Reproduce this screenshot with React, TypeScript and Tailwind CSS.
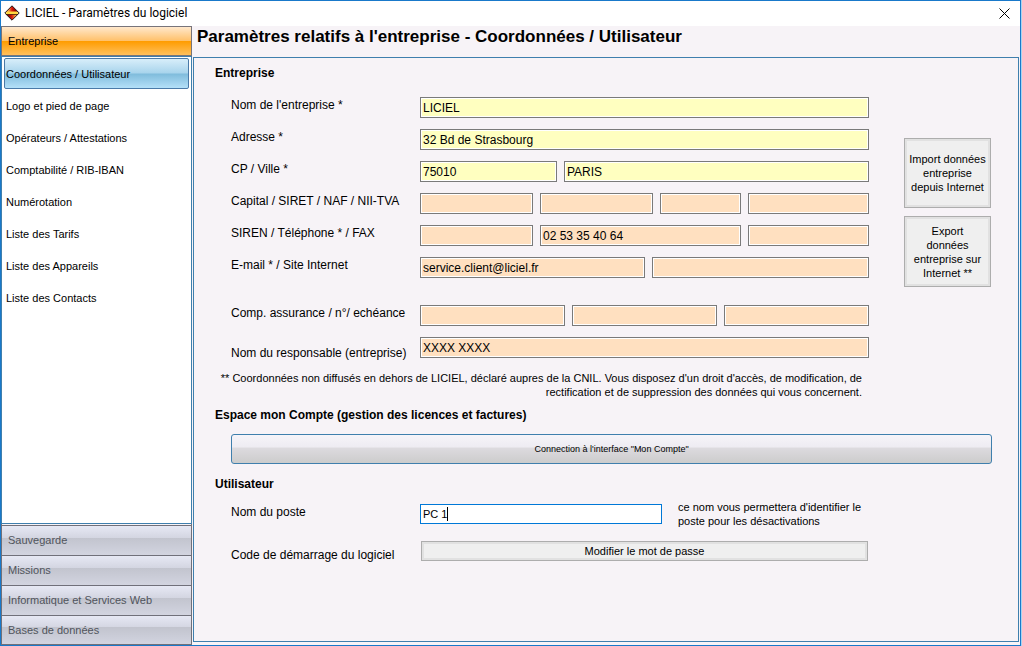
import { useState, type ReactNode } from 'react';

const menuItems = [
  'Coordonnées / Utilisateur',
  'Logo et pied de page',
  'Opérateurs / Attestations',
  'Comptabilité / RIB-IBAN',
  'Numérotation',
  'Liste des Tarifs',
  'Liste des Appareils',
  'Liste des Contacts',
];

const sections = ['Sauvegarde', 'Missions', 'Informatique et Services Web', 'Bases de données'];

interface FieldProps {
  id: string;
  label: string;
  value?: string;
  color?: string;
}

function Field({ id, label, value = '', color = 'bg-[#ffe0c0]' }: FieldProps) {
  return (
    <input
      id={id}
      aria-label={label}
      defaultValue={value}
      className={`h-[21px] w-full min-w-0 border border-[#7a7a7a] px-0.5 text-[12px] leading-4 shadow-[inset_0_0_0_1px_#fff] outline-none ${color}`}
    />
  );
}

interface RowProps {
  label: string;
  htmlFor: string;
  cols?: string;
  low?: boolean;
  children: ReactNode;
}

function Row({ label, htmlFor, cols = 'grid-cols-1', low, children }: RowProps) {
  return (
    <div className="flex items-start">
      <label htmlFor={htmlFor} className={`w-[189px] shrink-0 text-[12px] leading-4 ${low ? 'pt-2' : ''}`}>
        {label}
      </label>
      <div className={`grid min-w-0 flex-1 gap-[7px] ${cols}`}>{children}</div>
    </div>
  );
}

function Logo() {
  return (
    <svg width="16" height="16" viewBox="0 0 16 16" aria-hidden="true">
      <defs>
        <linearGradient id="logoTop" x1="0" x2="1">
          <stop offset="0.2" stopColor="#f8a050" />
          <stop offset="0.5" stopColor="#d81808" />
          <stop offset="0.8" stopColor="#8c0000" />
        </linearGradient>
        <linearGradient id="logoBottom" x1="0" x2="1">
          <stop offset="0.2" stopColor="#8c0000" />
          <stop offset="0.5" stopColor="#d82010" />
          <stop offset="0.8" stopColor="#f8b040" />
        </linearGradient>
      </defs>
      <path d="M8 1 L14 7 H2 Z" fill="url(#logoTop)" />
      <path d="M2 9 H14 L8 15 Z" fill="url(#logoBottom)" />
      <path d="M1.500 8 L3 6.500 H13 L14.500 8 L13 9.500 H3 Z" fill="#ffd840" />
      <path d="M2 9.500 H14" stroke="#401008" strokeWidth="0.8" />
      <path d="M8 0.800 L15.200 8 L8 15.200 L0.800 8 Z" fill="none" stroke="#201010" strokeWidth="1" />
    </svg>
  );
}

const yellow = 'bg-[#ffffc0]';
const flatButton = 'border border-[#adadad] bg-[#efefef] text-[11px] leading-[14px] shadow-[inset_0_0_0_2px_#e1e1e1]';

export default function App() {
  const [active, setActive] = useState(0);

  return (
    <div className="min-h-screen bg-[#a9d3f0] pr-px font-['Liberation_Sans',Arial,sans-serif] text-black">
      <div className="flex min-h-screen flex-col border border-[#1979ca] bg-[#f7f3f7]">
        <header className="flex h-[25px] items-center bg-white pr-2 pb-px pl-[3px]">
          <Logo />
          <h1 className="ml-[5px] flex-1 font-[Roboto,'Open_Sans',sans-serif] text-[12px] leading-4">
            LICIEL - Paramètres du logiciel
          </h1>
          <button type="button" aria-label="Fermer" className="p-0.5">
            <svg width="11" height="11" viewBox="0 0 11 11" stroke="#000" strokeWidth="1">
              <path d="M0.500 0.500 L10.500 10.500 M10.500 0.500 L0.500 10.500" />
            </svg>
          </button>
        </header>

        <div className="flex flex-1">
          <nav className="flex w-[191px] shrink-0 flex-col text-[11px]">
            <button
              type="button"
              className="h-[30px] border border-[#77747a] pl-1.5 text-left [background-image:linear-gradient(#ffe8cc_0%,#ffc068_50%,#ff9c00_51%,#ffc05c_100%)]"
            >
              Entreprise
            </button>
            <ul className="flex flex-1 flex-col border-x border-y border-[#3f7fad] bg-white pt-px">
              {menuItems.map((item, i) => (
                <li key={item} className="h-8 px-0.5">
                  <button
                    type="button"
                    onClick={() => setActive(i)}
                    className={`h-[31px] w-full rounded-xs border pt-0.5 pl-px text-left ${
                      active === i
                        ? 'border-[#4a7aa8] [background-image:linear-gradient(#d8eefa_0%,#a8d4ec_48%,#80bcdc_52%,#b4e0f8_100%)]'
                        : 'border-transparent'
                    }`}
                  >
                    {item}
                  </button>
                </li>
              ))}
            </ul>
            <div className="border-x border-b border-[#70707a] pt-px">
              {sections.map((section) => (
                <button
                  key={section}
                  type="button"
                  className="block h-[30px] w-full border-t border-[#70707a] pl-1.5 text-left text-[#50545c] last:h-[29px] [background-image:linear-gradient(#e6e8f4_0%,#d4d6e2_40%,#c2c4ce_41%,#d2d4e0_100%)]"
                >
                  {section}
                </button>
              ))}
            </div>
          </nav>

          <main className="flex min-w-0 flex-1 flex-col pr-px pb-[3px] pl-px">
            <h2 className="h-[31px] pl-1 text-[17px] leading-[22px] font-bold">
              Paramètres relatifs à l'entreprise - Coordonnées / Utilisateur
            </h2>
            <form className="flex-1 border border-[#3f7fad] pt-[7px] pr-[26px] pb-4 pl-[21px]" onSubmit={(e) => e.preventDefault()}>
              <h3 className="text-[12px] leading-4 font-bold">Entreprise</h3>
              <div className="mt-4 flex gap-[35px] pl-4">
                <div className="min-w-0 flex-1">
                  <div className="flex flex-col gap-[11px]">
                    <Row label="Nom de l'entreprise *" htmlFor="nom">
                      <Field id="nom" label="Nom de l'entreprise" value="LICIEL" color={yellow} />
                    </Row>
                    <Row label="Adresse *" htmlFor="adresse">
                      <Field id="adresse" label="Adresse" value="32 Bd de Strasbourg" color={yellow} />
                    </Row>
                    <Row label="CP / Ville *" htmlFor="cp" cols="grid-cols-[137fr_305fr]">
                      <Field id="cp" label="Code postal" value="75010" color={yellow} />
                      <Field id="ville" label="Ville" value="PARIS" color={yellow} />
                    </Row>
                    <Row label="Capital / SIRET / NAF / NII-TVA" htmlFor="capital" cols="grid-cols-[113fr_113fr_81fr_121fr]">
                      <Field id="capital" label="Capital" />
                      <Field id="siret" label="SIRET" />
                      <Field id="naf" label="NAF" />
                      <Field id="tva" label="NII-TVA" />
                    </Row>
                    <Row label="SIREN / Téléphone * / FAX" htmlFor="siren" cols="grid-cols-[113fr_201fr_121fr]">
                      <Field id="siren" label="SIREN" />
                      <Field id="tel" label="Téléphone" value="02 53 35 40 64" />
                      <Field id="fax" label="FAX" />
                    </Row>
                    <Row label="E-mail * / Site Internet" htmlFor="email" cols="grid-cols-[225fr_217fr]">
                      <Field id="email" label="E-mail" value="service.client@liciel.fr" />
                      <Field id="site" label="Site Internet" />
                    </Row>
                  </div>
                  <div className="mt-[27px] flex flex-col gap-[11px]">
                    <Row label="Comp. assurance / n°/ echéance" htmlFor="assurance" cols="grid-cols-3">
                      <Field id="assurance" label="Compagnie d'assurance" />
                      <Field id="police" label="Numéro" />
                      <Field id="echeance" label="Echéance" />
                    </Row>
                    <Row label="Nom du responsable (entreprise)" htmlFor="responsable" low>
                      <Field id="responsable" label="Nom du responsable" value="XXXX XXXX" />
                    </Row>
                  </div>
                  <p className="mt-2.5 -ml-4 pr-[7px] text-right text-[11px] leading-[14px]">
                    ** Coordonnées non diffusés en dehors de LICIEL, déclaré aupres de la CNIL. Vous disposez d'un droit
                    d'accès, de modification, de
                    <br />
                    rectification et de suppression des données qui vous concernent.
                  </p>
                </div>
                <div className="flex w-[88px] shrink-0 flex-col gap-2 pt-[41px] pr-px">
                  <button type="button" className={`h-[70px] px-1 ${flatButton}`}>
                    Import données entreprise depuis Internet
                  </button>
                  <button type="button" className={`h-[71px] px-2 ${flatButton}`}>
                    Export données entreprise sur Internet **
                  </button>
                </div>
              </div>

              <h3 className="mt-2 text-[12px] leading-4 font-bold">Espace mon Compte (gestion des licences et factures)</h3>
              <div className="mt-[11px] pl-4">
                <button
                  type="button"
                  className="h-[30px] w-full rounded-[3px] border border-[#3f7fad] pt-0.5 text-[9px] [background-image:linear-gradient(#f6f4f9_0%,#eeecf2_42%,#dcdade_48%,#cccccc_100%)]"
                >
                  Connection à l'interface "Mon Compte"
                </button>
              </div>

              <h3 className="mt-3 text-[12px] leading-4 font-bold">Utilisateur</h3>
              <div className="mt-2 flex items-start pl-4">
                <label htmlFor="poste" className="w-[189px] shrink-0 pt-1 text-[12px] leading-4">
                  Nom du poste
                </label>
                <div className="relative mt-1 w-[242px]">
                  <input
                    id="poste"
                    defaultValue="PC 1"
                    className="block h-5 w-full border border-[#0078d7] bg-white px-0.5 text-[11px] outline-none"
                  />
                  <span className="absolute top-[3px] left-[27px] h-3.5 w-px bg-black" />
                </div>
                <p className="ml-4 w-[190px] text-[11px] leading-[14px]">
                  ce nom vous permettera d'identifier le poste pour les désactivations
                </p>
              </div>
              <div className="mt-[13px] flex items-start pl-4">
                <label htmlFor="code" className="w-[190px] shrink-0 pt-1.5 text-[12px] leading-4">
                  Code de démarrage du logiciel
                </label>
                <button id="code" type="button" className={`mr-[124px] h-5 flex-1 ${flatButton}`}>
                  Modifier le mot de passe
                </button>
              </div>
            </form>
          </main>
        </div>
      </div>
    </div>
  );
}
